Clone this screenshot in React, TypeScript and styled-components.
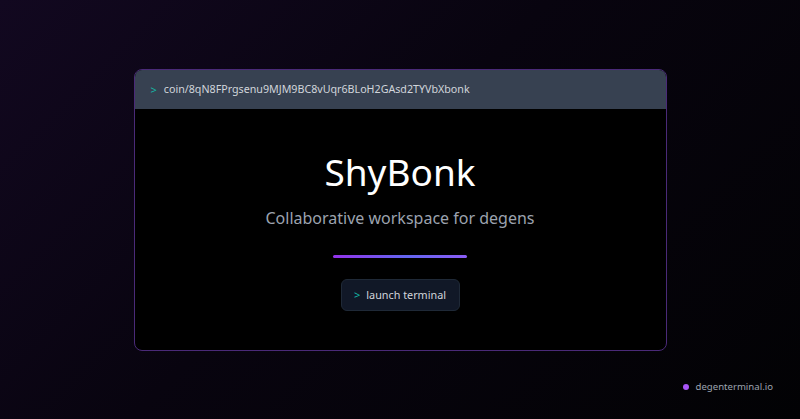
import React from "react";
import styled, { createGlobalStyle } from "styled-components";

const Global = createGlobalStyle`
  html, body { margin: 0; padding: 0; background: #05030a; }
  body { font-family: "Noto Sans", "Open Sans", sans-serif; }
  * { box-sizing: border-box; }
`;

const Page = styled.div`
  width: 800px;
  height: 419px;
  display: grid;
  grid-template-rows: 1fr auto 1fr;
  justify-items: center;
  background: linear-gradient(135deg, #120820 0%, #08040f 45%, #020204 100%);
  overflow: hidden;
`;

const Card = styled.div`
  grid-row: 2;
  width: 533px;
  height: 282px;
  border: 1px solid #4a2a78;
  border-radius: 8px;
  background: #000;
  overflow: hidden;
  display: flex;
  flex-direction: column;
`;

const Header = styled.div`
  height: 39px;
  flex: none;
  background: #374151;
  display: flex;
  align-items: center;
  padding-left: 16px;
  gap: 7px;
  font-size: 10.7px;
  color: #d1d5db;
`;

const Prompt = styled.span`
  color: #14b8a6;
  font-size: 11px;
`;

const Body = styled.div`
  flex: 1;
  display: flex;
  flex-direction: column;
  align-items: center;
  padding-top: 39px;
`;

const Title = styled.h1`
  margin: 0;
  font-weight: 400;
  font-size: 37px;
  line-height: 48px;
  color: #ffffff;
`;

const Subtitle = styled.p`
  margin: 10px 0 0;
  font-size: 16px;
  line-height: 24px;
  color: #9ca3af;
`;

const Divider = styled.div`
  margin-top: 25px;
  width: 134px;
  height: 3px;
  border-radius: 2px;
  background: linear-gradient(90deg, #9333ea 0%, #6366f1 55%, #8b5cf6 100%);
`;

const Button = styled.button`
  margin-top: 21px;
  height: 32px;
  width: 119px;
  display: flex;
  align-items: center;
  justify-content: center;
  gap: 6px;
  background: #111827;
  border: 1px solid #1f2937;
  border-radius: 6px;
  color: #d1d5db;
  font-family: inherit;
  font-size: 10.8px;
  padding: 0;
`;

const Footer = styled.div`
  grid-row: 3;
  justify-self: end;
  align-self: end;
  display: flex;
  align-items: center;
  gap: 7px;
  padding: 0 27px 26px 0;
  font-size: 9.6px;
  color: #9ca3af;
`;

const Dot = styled.span`
  width: 6px;
  height: 6px;
  border-radius: 50%;
  background: #a855f7;
`;

export default function App() {
  return (
    <>
      <Global />
      <Page>
        <Card>
          <Header>
            <Prompt>&gt;</Prompt>
            <span>coin/8qN8FPrgsenu9MJM9BC8vUqr6BLoH2GAsd2TYVbXbonk</span>
          </Header>
          <Body>
            <Title>ShyBonk</Title>
            <Subtitle>Collaborative workspace for degens</Subtitle>
            <Divider />
            <Button>
              <Prompt>&gt;</Prompt>
              <span>launch terminal</span>
            </Button>
          </Body>
        </Card>
        <Footer>
          <Dot />
          <span>degenterminal.io</span>
        </Footer>
      </Page>
    </>
  );
}
